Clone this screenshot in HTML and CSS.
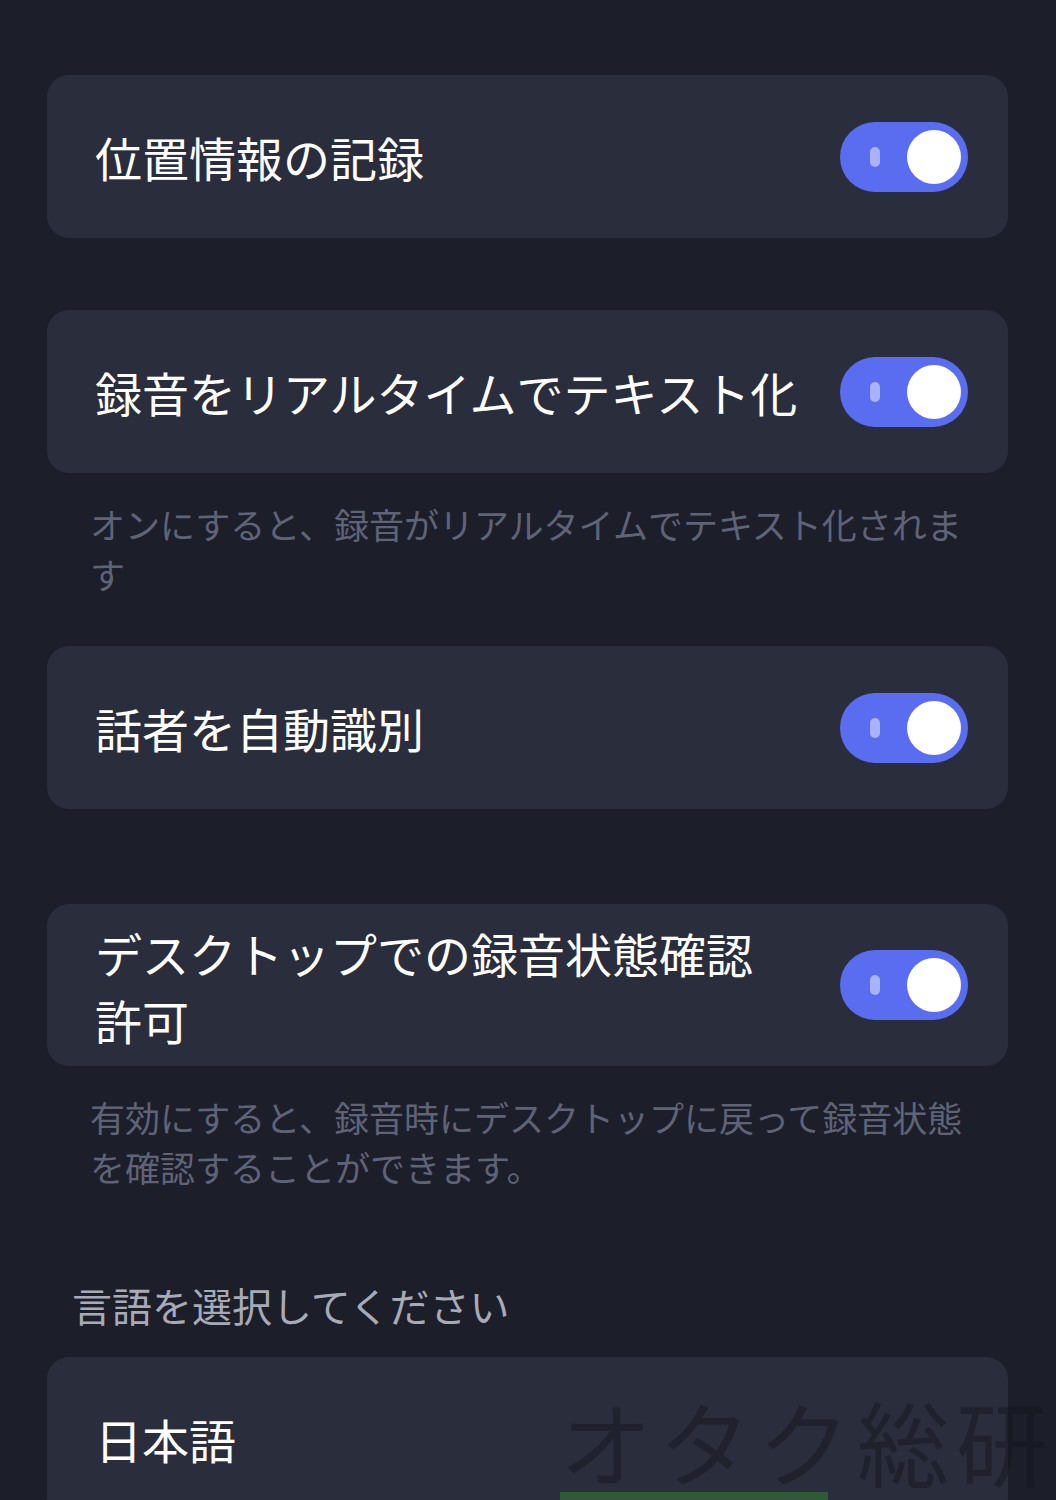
FILE: index.html
```html
<!DOCTYPE html>
<html lang="ja">
<head>
    <meta charset="UTF-8">
    <meta name="viewport" content="width=device-width, initial-scale=1.0">
    <title>録音設定</title>
    <link rel="stylesheet" href="styles.css">
</head>
<body>
    <div class="settings">
        <div class="card">
            <span class="card-title">位置情報の記録</span>
            <div class="toggle on"><span class="toggle-mark"></span><span class="toggle-knob"></span></div>
        </div>

        <div class="card gap-top">
            <span class="card-title">録音をリアルタイムでテキスト化</span>
            <div class="toggle on"><span class="toggle-mark"></span><span class="toggle-knob"></span></div>
        </div>
        <p class="hint">オンにすると、録音がリアルタイムでテキスト化されます</p>

        <div class="card">
            <span class="card-title">話者を自動識別</span>
            <div class="toggle on"><span class="toggle-mark"></span><span class="toggle-knob"></span></div>
        </div>

        <div class="card gap-top-lg">
            <span class="card-title two-line">デスクトップでの録音状態確認<br>許可</span>
            <div class="toggle on"><span class="toggle-mark"></span><span class="toggle-knob"></span></div>
        </div>
        <p class="hint">有効にすると、録音時にデスクトップに戻って録音状態を確認することができます。</p>

        <h2 class="section-label">言語を選択してください</h2>
        <div class="card">
            <span class="card-title">日本語</span>
        </div>
    </div>

    <div class="watermark">
        <span>オタク総研</span>
        <div class="watermark-bar"></div>
    </div>
</body>
</html>
```

FILE: styles.css
```css
body {
    margin: 0;
    background-color: #1c1e29;
    font-family: "Noto Sans CJK JP", "Noto Sans", sans-serif;
    color: #ffffff;
    position: relative;
    min-height: 1500px;
    overflow: hidden;
}
.settings {
    padding: 75px 48px 0 47px;
}
.card {
    display: flex;
    align-items: center;
    justify-content: space-between;
    min-height: 163px;
    box-sizing: border-box;
    padding: 0 40px 0 48px;
    background-color: #2a2e3c;
    border-radius: 22px;
}
.gap-top {
    margin-top: 72px;
}
.gap-top-lg {
    margin-top: 95px;
    min-height: 162px;
}
.card-title {
    font-size: 47px;
    line-height: 1.3;
}
.card-title.two-line {
    line-height: 67px;
    margin-top: 2px;
}
.toggle {
    display: flex;
    align-items: center;
    justify-content: space-between;
    flex-shrink: 0;
    width: 128px;
    height: 70px;
    box-sizing: border-box;
    padding: 0 7px 0 30px;
    border-radius: 35px;
    background-color: #5a6df1;
}
.toggle-mark {
    width: 10px;
    height: 20px;
    border-radius: 5px;
    background-color: #a9b3f8;
}
.toggle-knob {
    width: 54px;
    height: 54px;
    border-radius: 50%;
    background-color: #ffffff;
}
.hint {
    margin: 26px 0 47px;
    padding: 0 20px 0 43px;
    font-size: 35px;
    line-height: 50px;
    color: #5f6378;
}
.section-label {
    margin: 85px 0 24px;
    padding-left: 25px;
    font-size: 40px;
    font-weight: normal;
    line-height: 56px;
    color: #a7aab7;
}
.watermark {
    position: absolute;
    left: 560px;
    top: 1394px;
    font-size: 92px;
    line-height: 1;
    letter-spacing: 7px;
    color: rgba(20, 22, 30, 0.5);
    white-space: nowrap;
    pointer-events: none;
}
.watermark-bar {
    width: 268px;
    height: 10px;
    margin-top: 6px;
    background-color: #2e5a36;
}
```
